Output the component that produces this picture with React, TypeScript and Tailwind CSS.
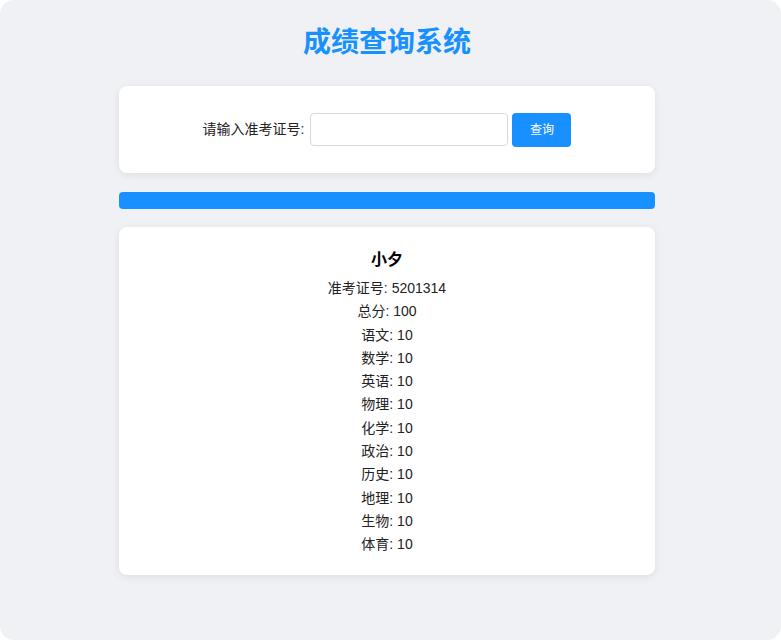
import { useState } from 'react';

type Score = {
  name: string;
  examId: string;
  total: number;
  subjects: [string, number][];
};

const result: Score = {
  name: '小夕',
  examId: '5201314',
  total: 100,
  subjects: [
    ['语文', 10],
    ['数学', 10],
    ['英语', 10],
    ['物理', 10],
    ['化学', 10],
    ['政治', 10],
    ['历史', 10],
    ['地理', 10],
    ['生物', 10],
    ['体育', 10],
  ],
};

export default function App() {
  const [examId, setExamId] = useState('');

  return (
    <div
      className="h-[640px] w-full bg-white"
      style={{ fontFamily: '"Liberation Sans", "Noto Sans CJK SC", sans-serif' }}
    >
      <div className="h-full rounded-[14px] bg-[#f0f1f5] pt-[22px] pr-[7px]">
        <h1 className="text-center text-[28px] font-bold leading-[42px] text-[#1890ff]">成绩查询系统</h1>

        <div className="mx-auto mt-[22px] w-[536px]">
          <div className="flex h-[87px] items-center justify-center rounded-lg bg-white shadow-[0_2px_8px_rgba(0,0,0,0.08)]">
            <label className="mr-[6px] text-[14px] text-[#222]">请输入准考证号:</label>
            <input
              className="h-[33px] w-[198px] rounded border border-[#d9d9d9] px-2 text-[14px] outline-none"
              type="text"
              value={examId}
              onChange={(e) => setExamId(e.target.value)}
            />
            <button className="ml-[4px] h-[34px] w-[59px] cursor-pointer rounded bg-[#1890ff] text-[12px] text-white">
              查询
            </button>
          </div>

          <div className="mt-[19px] h-[17px] rounded bg-[#1890ff]" />

          <div className="mt-[18px] rounded-lg bg-white px-5 pt-[21px] pb-[18px] text-center shadow-[0_2px_8px_rgba(0,0,0,0.08)]">
            <h2 className="mb-[5px] text-[16px] font-bold leading-[24px] text-black">{result.name}</h2>
            <p className="text-[14px] leading-[23.3px] text-[#222]">准考证号: {result.examId}</p>
            <p className="text-[14px] leading-[23.3px] text-[#222]">总分: {result.total}</p>
            {result.subjects.map(([subject, score]) => (
              <p key={subject} className="text-[14px] leading-[23.3px] text-[#222]">
                {subject}: {score}
              </p>
            ))}
          </div>
        </div>
      </div>
    </div>
  );
}
